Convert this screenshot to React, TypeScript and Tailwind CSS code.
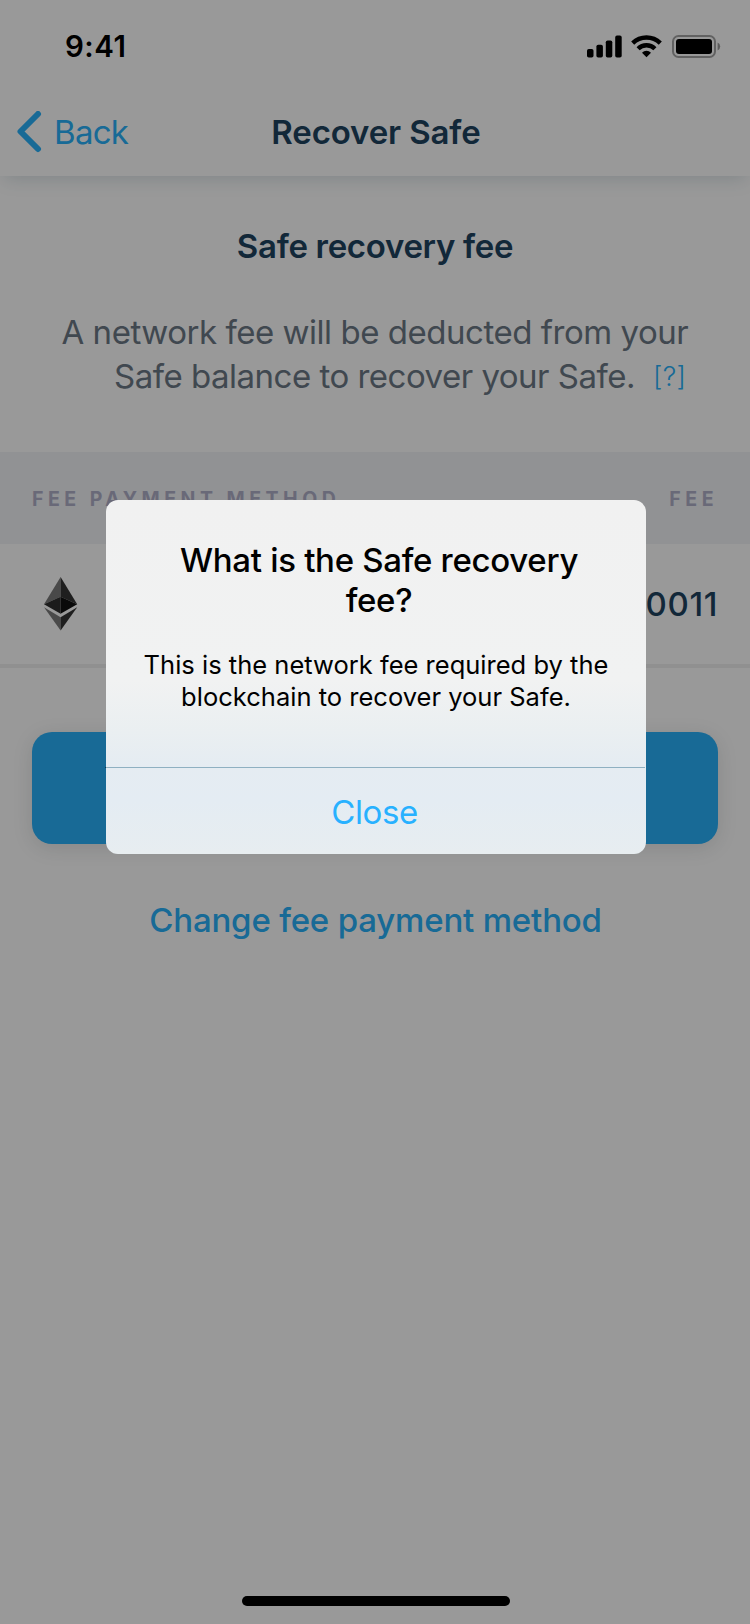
function SignalIcon() {
  return (
    <svg width="35" height="23" viewBox="0 0 35 23" fill="black">
      <rect x="0" y="14" width="6.5" height="8.5" rx="1.8" />
      <rect x="9.4" y="9.8" width="6.5" height="12.7" rx="1.8" />
      <rect x="18.8" y="5.4" width="6.5" height="17.1" rx="1.8" />
      <rect x="28.2" y="0.6" width="6.5" height="21.9" rx="1.8" />
    </svg>
  );
}

function WifiIcon() {
  return (
    <svg width="31" height="23" viewBox="0 0 31 23" fill="none" stroke="black" strokeWidth="4.4">
      <path d="M1.7 8.1A19.8 19.8 0 0 1 29.3 8.1" />
      <path d="M7.1 13.7A12 12 0 0 1 23.9 13.7" />
      <path d="M11 17.7A6.4 6.4 0 0 1 20 17.7L15.5 22.2Z" fill="black" stroke="none" />
    </svg>
  );
}

function BatteryIcon() {
  return (
    <svg width="49" height="23" viewBox="0 0 49 23">
      <rect x="1" y="1" width="42" height="21" rx="5.5" fill="none" stroke="black" strokeOpacity="0.36" strokeWidth="2" />
      <rect x="4" y="4" width="36" height="15" rx="3" fill="black" />
      <path d="M45.6 7.5A4.4 4.4 0 0 1 45.6 15.5Z" fill="black" fillOpacity="0.4" />
    </svg>
  );
}

function EthereumIcon() {
  return (
    <svg width="34" height="54" viewBox="0 0 34 54">
      <path d="M16.6 0L0 27.2L16.6 19.8Z" fill="#7a7a7a" />
      <path d="M16.6 0L33.2 27.2L16.6 19.8Z" fill="#343434" />
      <path d="M0 27.2L16.6 19.7V36.8Z" fill="#2d2d2d" />
      <path d="M33.2 27.2L16.6 19.7V36.8Z" fill="#101010" />
      <path d="M0 30.2L16.6 40.2V53.6Z" fill="#7c7c7c" />
      <path d="M33.2 30.2L16.6 40.2V53.6Z" fill="#343434" />
    </svg>
  );
}

function StatusBar() {
  return (
    <div className="flex h-[88px] items-center justify-between pt-[4px] pr-[29px] pb-0 pl-[65px]">
      <span className="text-[29.5px] leading-[36px] font-semibold tracking-[0.5px] text-black">9:41</span>
      <div className="flex items-center">
        <SignalIcon />
        <div className="ml-[9px]">
          <WifiIcon />
        </div>
        <div className="ml-[10px]">
          <BatteryIcon />
        </div>
      </div>
    </div>
  );
}

function NavBar() {
  return (
    <div className="grid h-[88px] grid-cols-[1fr_auto_1fr] items-center text-[33px] leading-[44px]">
      <button className="flex items-center gap-[11px] pl-[15px] text-[#28b1fa]">
        <svg width="28" height="42" viewBox="0 0 28 42" fill="none" stroke="currentColor" strokeWidth="6" strokeLinecap="round" strokeLinejoin="round">
          <path d="M23 3L5.5 20.5L23 38" />
        </svg>
        <span className="tracking-[-0.7px]">Back</span>
      </button>
      <h1 className="pl-[2px] font-semibold tracking-[-0.14px] text-[#1e445f]">Recover Safe</h1>
      <span />
    </div>
  );
}

function Dialog() {
  return (
    <div className="h-[354px] w-[540px] rounded-[12px] bg-[linear-gradient(180deg,#f1f1f1_0px,#f1f2f2_180px,#eaeff1_232px,#e5ecf2_266px,#e4ecf3_300px,#e7edf0_354px)] text-center text-black">
      <h2 className="pt-[40px] pl-[6px] text-[33px] leading-[40px] font-medium tracking-[-0.3px]">
        What is the Safe recovery
        <br />
        fee?
      </h2>
      <p className="mt-[29px] text-[25.5px] leading-[32px] tracking-[0.01px]">
        This is the network fee required by the
        <br />
        blockchain to recover your Safe.
      </p>
      <div className="mt-[54px] -ml-px h-px w-[540px] border-l border-[#10384f] bg-[#8fb0c1]" />
      <button className="h-[86px] w-full pt-[2px] pr-[3px] text-[33px] leading-[44px] tracking-[-0.4px] text-[#28b1ff]">Close</button>
    </div>
  );
}

export default function App() {
  return (
    <div className="relative flex h-[1624px] w-[750px] flex-col overflow-hidden bg-white font-['Inter',sans-serif]">
      <header className="shadow-[0_6px_18px_-4px_rgba(40,84,104,0.2)]">
        <StatusBar />
        <NavBar />
      </header>

      <main className="flex flex-col text-[33px] leading-[44px]">
        <h2 className="mt-[48px] text-center font-semibold tracking-[-0.31px] text-[#1e445f]">Safe recovery fee</h2>
        <div className="mt-[42px] whitespace-nowrap text-[#6c7885]">
          <p className="pl-[61.5px] tracking-[-0.47px]">A network fee will be deducted from your</p>
          <p className="flex pl-[114px]">
            <span className="tracking-[-0.5px]">Safe balance to recover your Safe.</span>
            <a className="ml-[18px] pt-[2px] text-[27px] leading-[42px] font-light tracking-[0.3px] text-[#28b1fa]">[?]</a>
          </p>
        </div>

        <div className="mt-[54px] flex h-[92px] items-center justify-between bg-[#f2f3f7] px-[32px] pt-[2px] text-[19.5px] font-bold tracking-[4.5px] text-[#b0b0c8]">
          <span>FEE PAYMENT METHOD</span>
          <span>FEE</span>
        </div>
        <div className="flex h-[124px] items-center justify-between border-b-4 border-[#f0f0f0] pr-[32px] pl-[44px]">
          <EthereumIcon />
          <span className="font-medium tracking-[0.6px] text-[#1e445f]">0011</span>
        </div>

        <div className="mx-[32px] mt-[64px] h-[112px] rounded-[20px] bg-[#28b1fa] shadow-[0_4px_20px_rgba(40,54,61,0.14)]" />
        <button className="mt-[54px] pl-px text-center font-medium tracking-[-0.18px] text-[#28b1fa]">Change fee payment method</button>
      </main>

      <div className="mt-auto mb-[18px] ml-[242px] h-[10px] w-[268px] rounded-full bg-black" />

      <div className="absolute inset-0 flex justify-center bg-black/40 pt-[500px] pl-[2px]">
        <Dialog />
      </div>
    </div>
  );
}
